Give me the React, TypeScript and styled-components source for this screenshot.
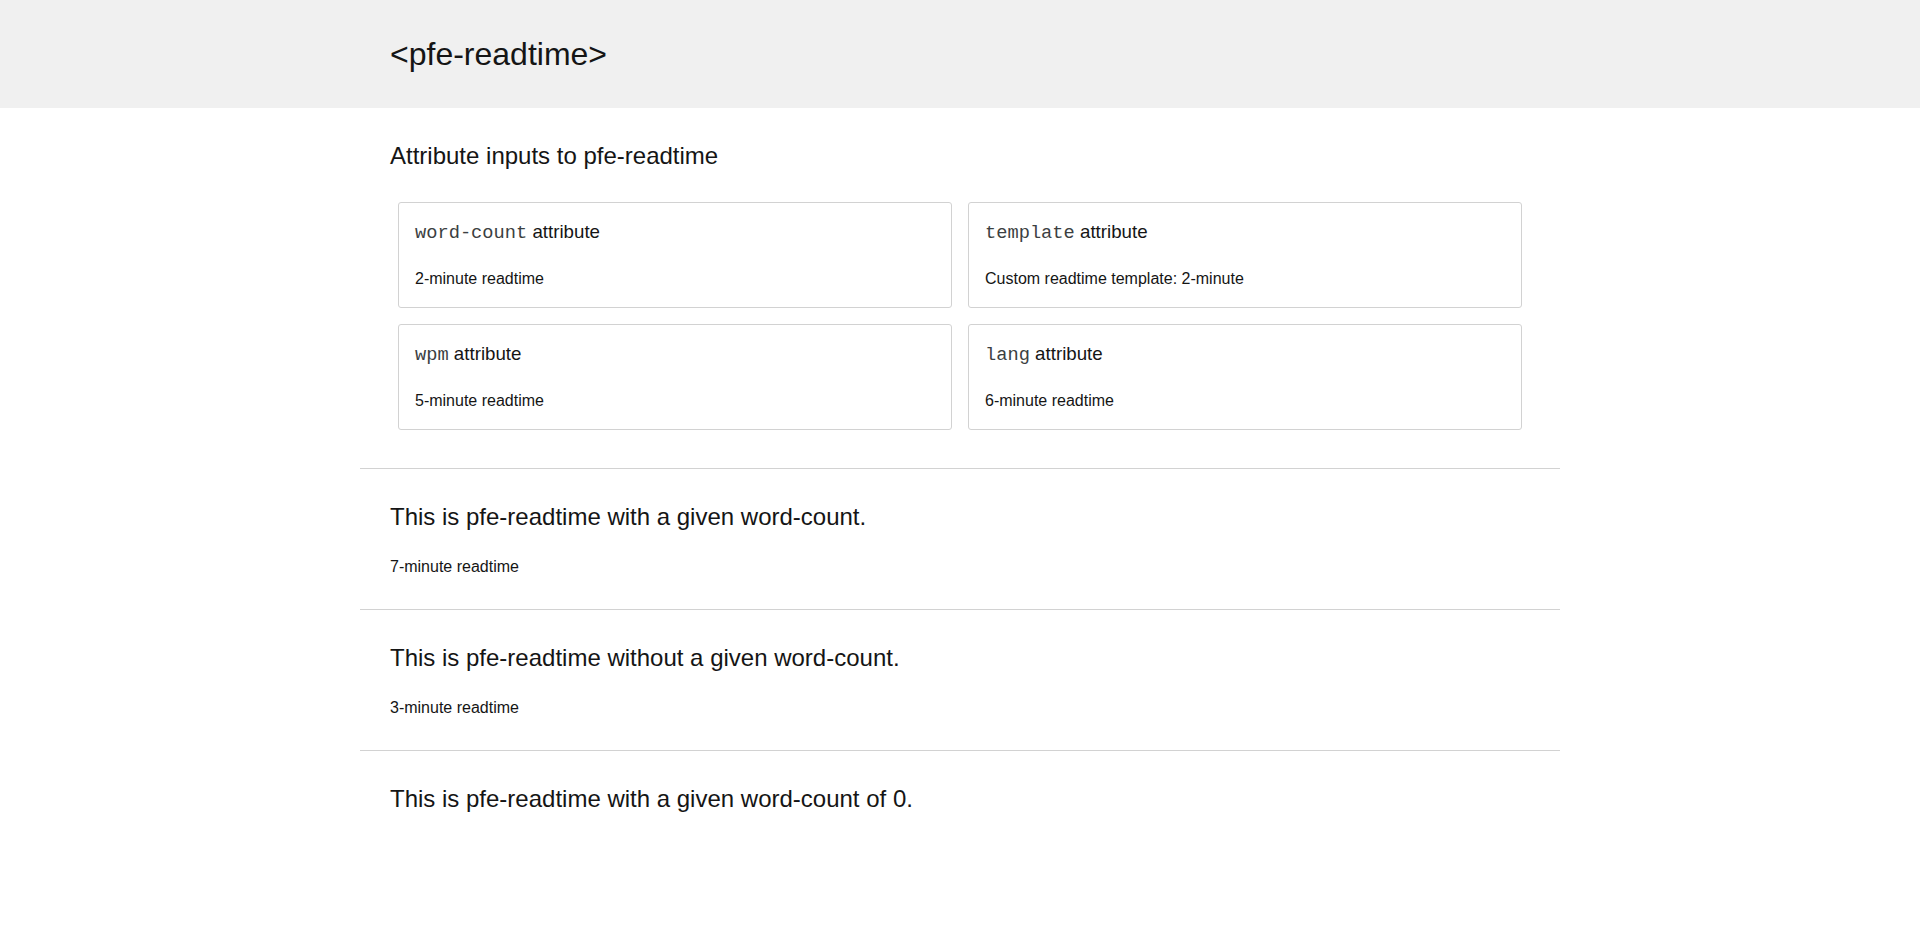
import React from "react";
import styled, { createGlobalStyle } from "styled-components";

const GlobalStyle = createGlobalStyle`
  html, body {
    margin: 0;
    padding: 0;
    background: #ffffff;
  }
  body {
    font-family: "Liberation Sans", Arial, sans-serif;
    color: #151515;
    font-size: 16px;
  }
`;

const Header = styled.header`
  background: #f0f0f0;
  height: 108px;
  box-sizing: border-box;
  padding-top: 36px;
`;

const Container = styled.div`
  width: 1200px;
  margin: 0 auto;
  box-sizing: border-box;
`;

const HeaderInner = styled(Container)`
  padding: 0 30px;
`;

const PageTitle = styled.h1`
  margin: 0;
  font-size: 32px;
  font-weight: 400;
  line-height: normal;
`;

const Section = styled.section<{ $first?: boolean; $last?: boolean }>`
  padding: ${(p) => (p.$first ? "34px 30px 38px" : p.$last ? "34px 30px 40px" : "34px 30px 33px")};
  border-top: ${(p) => (p.$first ? "none" : "1px solid #d2d2d2")};
`;

const SectionTitle = styled.h2<{ $gap: number }>`
  margin: 0 0 ${(p) => p.$gap}px;
  font-size: 24px;
  font-weight: 400;
  line-height: normal;
`;

const Readtime = styled.p`
  margin: 0;
  font-size: 16px;
  line-height: normal;
`;

const CardGrid = styled.div`
  display: grid;
  grid-template-columns: 1fr 1fr;
  column-gap: 16px;
  row-gap: 16px;
  margin: 0 8px;
`;

const Card = styled.div`
  border: 1px solid #d2d2d2;
  border-radius: 3px;
  padding: 18px 16px 19px;
  background: #fff;
`;

const CardTitle = styled.h3`
  margin: 0 0 26px;
  font-size: 18.72px;
  font-weight: 400;
  line-height: normal;
`;

const Code = styled.code`
  font-family: "Liberation Mono", "Courier New", monospace;
  font-size: 18.72px;
  color: #3c3f42;
`;

const cards = [
  { attr: "word-count", text: "2-minute readtime" },
  { attr: "template", text: "Custom readtime template: 2-minute" },
  { attr: "wpm", text: "5-minute readtime" },
  { attr: "lang", text: "6-minute readtime" },
];

export default function App() {
  return (
    <>
      <GlobalStyle />
      <Header>
        <HeaderInner>
          <PageTitle>&lt;pfe-readtime&gt;</PageTitle>
        </HeaderInner>
      </Header>
      <Container>
        <Section $first>
          <SectionTitle $gap={32}>Attribute inputs to pfe-readtime</SectionTitle>
          <CardGrid>
            {cards.map((c) => (
              <Card key={c.attr}>
                <CardTitle>
                  <Code>{c.attr}</Code> attribute
                </CardTitle>
                <Readtime>{c.text}</Readtime>
              </Card>
            ))}
          </CardGrid>
        </Section>
        <Section>
          <SectionTitle $gap={27}>This is pfe-readtime with a given word-count.</SectionTitle>
          <Readtime>7-minute readtime</Readtime>
        </Section>
        <Section>
          <SectionTitle $gap={27}>This is pfe-readtime without a given word-count.</SectionTitle>
          <Readtime>3-minute readtime</Readtime>
        </Section>
        <Section $last>
          <SectionTitle $gap={0}>This is pfe-readtime with a given word-count of 0.</SectionTitle>
        </Section>
      </Container>
    </>
  );
}
